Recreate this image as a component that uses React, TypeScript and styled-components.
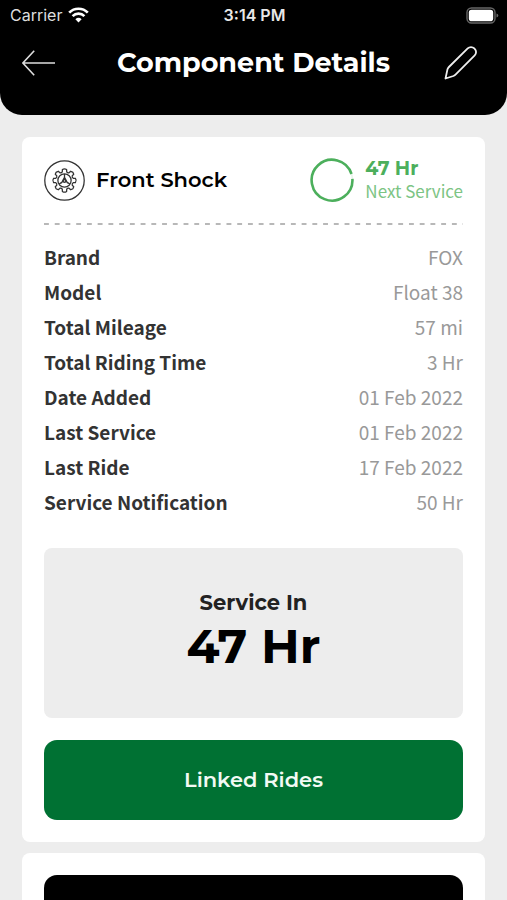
import React from "react";
import styled, { createGlobalStyle } from "styled-components";

const display = `Montserrat, Inter, "Open Sans", sans-serif`;
const text = `"Noto Sans CJK SC", "Noto Sans", sans-serif`;

const GlobalStyle = createGlobalStyle`
  *, *::before, *::after { box-sizing: border-box; }
  html { overflow-x: hidden; scrollbar-width: none; }
  body { margin: 0; background: #ededed; font-family: ${text}; color: #000; }
  h1, h2, p, dl, dd { margin: 0; }
  button { border: 0; padding: 0; background: none; font: inherit; cursor: pointer; }
`;

const Header = styled.header`
  background: #000;
  color: #fff;
  border-radius: 0 0 22px 22px;
  padding-bottom: 20px;
`;

const StatusBar = styled.div`
  display: grid;
  grid-template-columns: 1fr auto 1fr;
  align-items: center;
  height: 30px;
  padding: 0 8px 0 10px;
  font-family: Inter, sans-serif;
  font-size: 16px;
  line-height: 20px;
`;

const Carrier = styled.div`
  display: flex;
  align-items: center;
  gap: 6px;
  color: #dedede;
`;

const Clock = styled.time`
  font-weight: 600;
  color: #e8e8e8;
`;

const BatteryIcon = styled.svg`
  justify-self: end;
`;

const NavBar = styled.div`
  display: grid;
  grid-template-columns: 1fr auto 1fr;
  align-items: center;
  height: 65px;
  padding: 0 22px;
`;

const IconButton = styled.button`
  display: flex;
  justify-self: start;
  color: #fff;
`;

const EditButton = styled(IconButton)`
  justify-self: end;
  padding-right: 7px;
`;

const Title = styled.h1`
  font: 700 27px/36px ${display};
`;

const Content = styled.main`
  display: flex;
  flex-direction: column;
  gap: 11px;
  padding: 22px;
`;

const Card = styled.section`
  background: #fff;
  border-radius: 8px;
  padding: 22px;
`;

const CardHeader = styled.div`
  display: flex;
  align-items: center;
  justify-content: space-between;
  height: 42px;
`;

const Group = styled.div`
  display: flex;
  align-items: center;
  gap: 11px;
`;

const CardTitle = styled.h2`
  font: 600 21px/28px ${display};
`;

const NextService = styled.div`
  display: flex;
  flex-direction: column;
  color: #7cc484;
  font-size: 17px;
  line-height: 22px;
`;

const NextValue = styled.strong`
  font: 700 19px/22px ${display};
  color: #4caf5c;
`;

const Divider = styled.hr`
  height: 2px;
  margin: 22px 0 14px;
  border: 0;
  background: linear-gradient(90deg, #b8b8b8 50%, transparent 50%) 0 0 / calc(100% / 39) 2px;
`;

const Details = styled.dl`
  display: flex;
  flex-direction: column;
`;

const DetailRow = styled.div`
  display: flex;
  justify-content: space-between;
  font-size: 19px;
  line-height: 35px;
`;

const Label = styled.dt`
  font-weight: 700;
  color: #333;
`;

const Value = styled.dd`
  color: #999;
`;

const ServicePanel = styled.div`
  display: flex;
  flex-direction: column;
  align-items: center;
  margin: 29px 0 22px;
  padding: 41px 20px 43px;
  background: #ededed;
  border-radius: 8px;
`;

const ServiceLabel = styled.p`
  font: 700 21px/28px ${display};
  color: #222;
`;

const ServiceValue = styled.p`
  font: 700 48px/58px ${display};
`;

const ActionButton = styled.button<{ $tone: string }>`
  display: block;
  width: 100%;
  height: 80px;
  border-radius: 13px;
  background: ${(p) => p.$tone};
  color: #f2faf4;
  font: 600 21px/28px ${display};
`;

const details = [
  ["Brand", "FOX"],
  ["Model", "Float 38"],
  ["Total Mileage", "57 mi"],
  ["Total Riding Time", "3 Hr"],
  ["Date Added", "01 Feb 2022"],
  ["Last Service", "01 Feb 2022"],
  ["Last Ride", "17 Feb 2022"],
  ["Service Notification", "50 Hr"],
];

function gearPath() {
  const points: string[] = [];
  for (let i = 0; i < 8; i++) {
    const a = (i * Math.PI) / 4;
    const at = (r: number, d: number) =>
      `${(21 + r * Math.sin(a + d)).toFixed(2)} ${(21 - r * Math.cos(a + d)).toFixed(2)}`;
    points.push(
      `${i ? "L" : "M"}${at(9.2, -0.25)}L${at(11.4, -0.19)}Q${at(12.8, 0)} ${at(11.4, 0.19)}L${at(9.2, 0.25)}Q${at(8.2, 0.39)} ${at(9.2, 0.535)}`
    );
  }
  return points.join("") + "Z";
}

const Wifi = () => (
  <svg width="21" height="16" viewBox="0 0 21 16" fill="none" stroke="#fff" strokeWidth="2.7" aria-hidden="true">
    <path d="M1.2 5.6a13.2 13.2 0 0 1 18.6 0M4.6 9.1a8.4 8.4 0 0 1 11.8 0" />
    <path d="M10.5 15.4 7.4 12.3a4.5 4.5 0 0 1 6.2 0Z" fill="#fff" stroke="none" />
  </svg>
);

const Battery = () => (
  <BatteryIcon width="33" height="17" viewBox="0 0 33 17" role="img" aria-label="Battery full">
    <rect x="1" y="1" width="28" height="15" rx="4.5" fill="none" stroke="#666" strokeWidth="1.4" />
    <rect x="2.8" y="2.8" width="24.4" height="11.4" rx="2.8" fill="#fff" />
    <path d="M30.5 6.4q1.8.5 1.8 2.1t-1.8 2.1Z" fill="#666" />
  </BatteryIcon>
);

const BackArrow = () => (
  <svg width="34" height="26" viewBox="0 0 34 26" fill="none" stroke="#ddd" strokeWidth="1.6" aria-hidden="true">
    <path d="M12.2.8.9 13l11.3 12.2M1 13h32" />
  </svg>
);

const Pencil = () => (
  <svg width="34" height="34" viewBox="0 0 34 34" fill="none" stroke="#eee" strokeWidth="1.8" strokeLinejoin="round" aria-hidden="true">
    <path d="M1.5 32.5 3.4 23.6Q3.8 22.1 4.9 21L23.7 2.4a4.65 4.65 0 0 1 6.6 0l.4.4a4.65 4.65 0 0 1 0 6.6L12 28.2q-1.2 1.2-2.6 1.8Z" />
  </svg>
);

const Gear = () => (
  <svg width="41" height="41" viewBox="0 0 42 42" fill="none" stroke="#333" strokeWidth="1.3" aria-hidden="true">
    <circle cx="21" cy="21" r="20.2" />
    <path d={gearPath()} />
    <circle cx="21" cy="21" r="6.8" />
    <path d="M21 14.4v5.6M19.8 21.8l-4.4 2.9M22.2 21.8l4.4 2.9M21 17.8l-3.2 6M21 17.8l3.2 6" />
    <circle cx="21" cy="21.4" r="1.4" />
  </svg>
);

const ProgressRing = () => (
  <svg width="44" height="44" viewBox="0 0 44 44" fill="none" stroke="#4caf5c" strokeWidth="2.6" role="img" aria-label="Service interval remaining">
    <circle cx="22" cy="22" r="20.4" stroke="#e9f5eb" strokeWidth="1.5" />
    <path d="M42.4 20.8A20.4 20.4 0 1 1 41.5 16" />
  </svg>
);

export default function App() {
  return (
    <>
      <GlobalStyle />
      <Header>
        <StatusBar>
          <Carrier>Carrier <Wifi /></Carrier>
          <Clock>3:14 PM</Clock>
          <Battery />
        </StatusBar>
        <NavBar>
          <IconButton aria-label="Back"><BackArrow /></IconButton>
          <Title>Component Details</Title>
          <EditButton aria-label="Edit component"><Pencil /></EditButton>
        </NavBar>
      </Header>
      <Content>
        <Card>
          <CardHeader>
            <Group>
              <Gear />
              <CardTitle>Front Shock</CardTitle>
            </Group>
            <Group>
              <ProgressRing />
              <NextService>
                <NextValue>47 Hr</NextValue>
                Next Service
              </NextService>
            </Group>
          </CardHeader>
          <Divider />
          <Details>
            {details.map(([label, value]) => (
              <DetailRow key={label}>
                <Label>{label}</Label>
                <Value>{value}</Value>
              </DetailRow>
            ))}
          </Details>
          <ServicePanel>
            <ServiceLabel>Service In</ServiceLabel>
            <ServiceValue>47 Hr</ServiceValue>
          </ServicePanel>
          <ActionButton $tone="#007133">Linked Rides</ActionButton>
        </Card>
        <Card>
          <ActionButton $tone="#000" aria-label="More actions" />
        </Card>
      </Content>
    </>
  );
}
